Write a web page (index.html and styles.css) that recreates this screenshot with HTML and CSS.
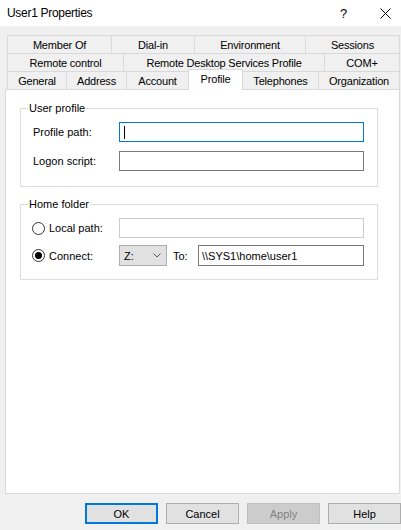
FILE: index.html
```html
<!DOCTYPE html>
<html>
<head>
<meta charset="utf-8">
<link rel="stylesheet" href="styles.css">
</head>
<body>
<div class="titlebar">
  <span class="title">User1 Properties</span>
  <span class="help">?</span>
  <span class="close"><svg width="11" height="11" viewBox="0 0 11 11"><path d="M0.5 0.5 L10.5 10.5 M10.5 0.5 L0.5 10.5" stroke="#000" stroke-width="1" fill="none"/></svg></span>
</div>
<div class="main">
  <div class="tabs">
    <div class="tabrow r1">
      <div class="tab">Member Of</div>
      <div class="tab">Dial-in</div>
      <div class="tab">Environment</div>
      <div class="tab">Sessions</div>
    </div>
    <div class="tabrow r2">
      <div class="tab">Remote control</div>
      <div class="tab">Remote Desktop Services Profile</div>
      <div class="tab">COM+</div>
    </div>
    <div class="tabrow r3">
      <div class="tab">General</div>
      <div class="tab">Address</div>
      <div class="tab">Account</div>
      <div class="tab active">Profile</div>
      <div class="tab">Telephones</div>
      <div class="tab">Organization</div>
    </div>
  </div>
  <div class="panel">
    <fieldset class="group">
      <legend>User profile</legend>
      <div class="row">
        <span class="lbl">Profile path:</span>
        <div class="input focus"><span class="caret"></span></div>
      </div>
      <div class="row">
        <span class="lbl">Logon script:</span>
        <div class="input"></div>
      </div>
    </fieldset>
    <fieldset class="group home">
      <legend>Home folder</legend>
      <div class="row">
        <span class="lbl"><span class="radio"></span>Local path:</span>
        <div class="input disabled"></div>
      </div>
      <div class="row row-connect">
        <span class="lbl"><span class="radio checked"></span>Connect:</span>
        <div class="combo"><span>Z:</span><svg width="8" height="5" viewBox="0 0 8 5"><path d="M0.5 0.5 L4 4 L7.5 0.5" stroke="#555" stroke-width="1" fill="none"/></svg></div>
        <span class="to">To:</span>
        <div class="input path">\\SYS1\home\user1</div>
      </div>
    </fieldset>
  </div>
  <div class="buttons">
    <div class="btn default">OK</div>
    <div class="btn">Cancel</div>
    <div class="btn disabled">Apply</div>
    <div class="btn">Help</div>
  </div>
</div>
</body>
</html>
```

FILE: styles.css
```css
* { box-sizing: border-box; }
html, body { margin: 0; padding: 0; }
body {
  width: 401px;
  height: 530px;
  background: #f0f0f0;
  font-family: "Liberation Sans", Arial, sans-serif;
  font-size: 11px;
  color: #000;
  overflow: hidden;
}
.titlebar {
  height: 26px;
  background: #fff;
  display: flex;
  align-items: center;
  padding-left: 7px;
}
.title { font-size: 12px; letter-spacing: -0.3px; flex: 1; }
.help { font-size: 13px; width: 46px; padding-left: 6px; }
.close { width: 21px; display: flex; align-items: center; height: 11px; }
.main { padding: 9px 0 0 5px; }
.tabs { margin-left: 2px; width: 393px; }
.tabrow { display: grid; grid-template-rows: 18px; }
.r1 { grid-template-columns: 104px 83px 111px 95px; }
.r2 { grid-template-columns: 116px 201px 76px; }
.r3 { grid-template-columns: 59px 60px 62px 54px 76px 82px; }
.tab {
  border-top: 1px solid #d9d9d9;
  border-left: 1px solid #d9d9d9;
  display: flex;
  align-items: center;
  justify-content: center;
  letter-spacing: -0.2px;
  white-space: nowrap;
}
.tab:last-child { border-right: 1px solid #d9d9d9; }
.tab.active {
  background: #fff;
  margin-top: -2px;
  margin-right: -1px;
  height: 21px;
  position: relative;
  z-index: 1;
  border-right: 1px solid #d9d9d9;
  align-items: flex-start;
  padding-top: 3px;
}
.panel {
  width: 395px;
  height: 405px;
  background: #fff;
  border: 1px solid #d9d9d9;
  padding: 11px 0 0 14px;
}
.group {
  margin: 0;
  width: 358px;
  min-width: 0;
  border: 1px solid #dcdcdc;
  padding: 7px 12px 15px 12px;
}
.group legend {
  padding: 0 1px;
  margin-left: -5px;
  line-height: 14px;
  font-size: 11px;
}
.home { margin-top: 10px; padding-bottom: 13px; }
.row { display: flex; align-items: center; height: 20px; }
.row + .row { margin-top: 9px; }
.home .row + .row { margin-top: 7px; }
.row-connect { height: 21px; }
.lbl { width: 86px; display: flex; align-items: center; flex: none; }
.input {
  width: 245px;
  height: 20px;
  border: 1px solid #7a7a7a;
  background: #fff;
  display: flex;
  align-items: center;
  padding-left: 4px;
}
.input.focus { border-color: #0078d7; }
.input.disabled { border-color: #cccccc; }
.caret { width: 1px; height: 13px; background: #000; }
.radio {
  width: 13px;
  height: 13px;
  border: 1px solid #333;
  border-radius: 50%;
  background: #fff;
  margin-left: -1px;
  margin-right: 4px;
  display: flex;
  align-items: center;
  justify-content: center;
}
.radio.checked::after {
  content: "";
  width: 7px;
  height: 7px;
  border-radius: 50%;
  background: #000;
}
.combo {
  width: 48px;
  height: 21px;
  background: #e1e1e1;
  border: 1px solid #adadad;
  display: flex;
  align-items: center;
  justify-content: space-between;
  padding: 0 5px 0 4px;
}
.to { width: 31px; padding-left: 6px; }
.input.path { width: 166px; height: 21px; padding-left: 3px; }
.buttons {
  display: flex;
  justify-content: flex-end;
  gap: 8px;
  margin-top: 9px;
}
.btn {
  width: 73px;
  height: 21px;
  background: #e1e1e1;
  border: 1px solid #adadad;
  display: flex;
  align-items: center;
  justify-content: center;
}
.btn.default { border: 2px solid #0078d7; }
.btn.disabled { background: #cccccc; border-color: #bfbfbf; color: #838383; }
```
